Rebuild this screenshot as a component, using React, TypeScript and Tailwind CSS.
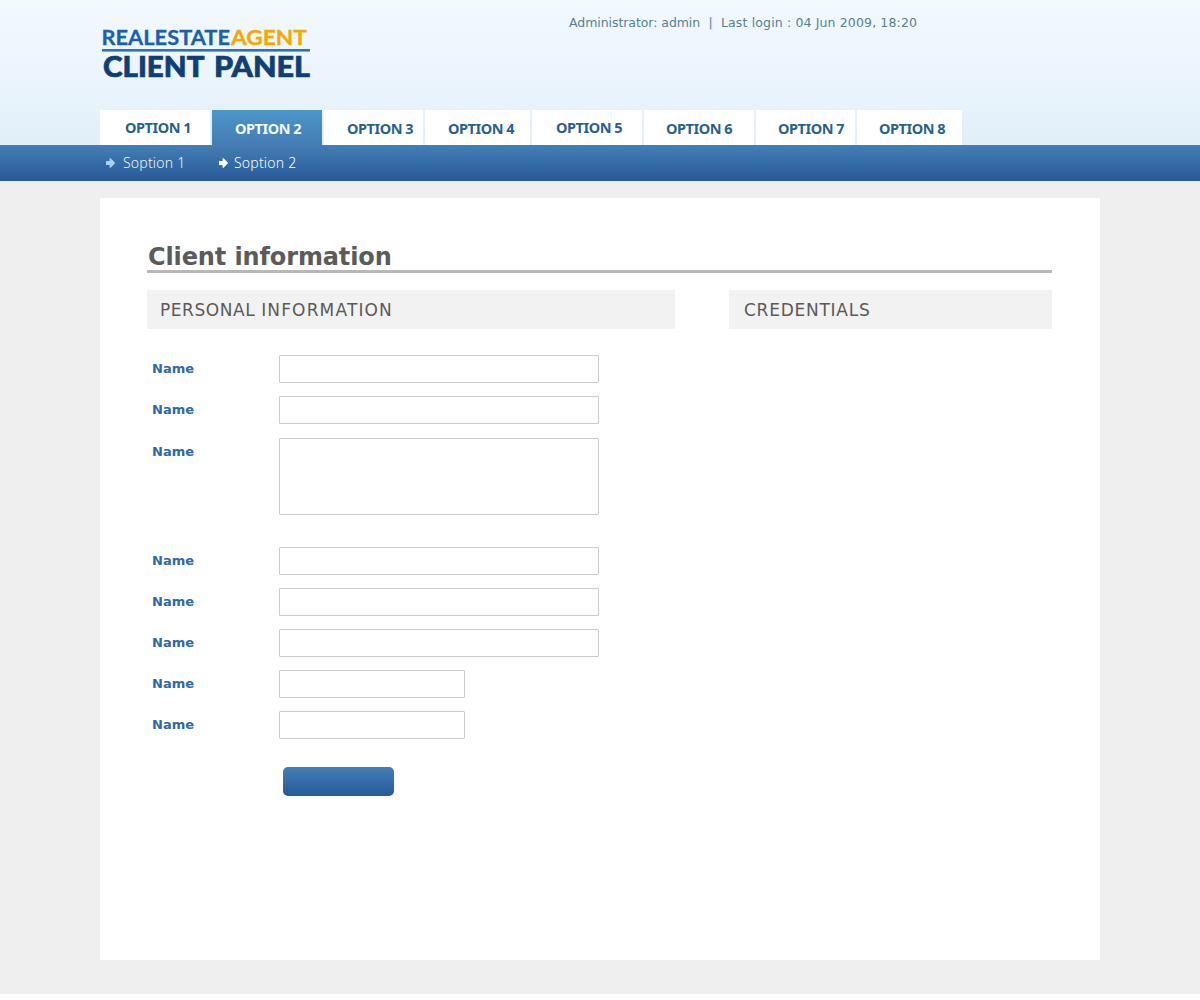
import React from "react";

const tabs = [
  { label: "OPTION 1", box: "w-[110px] pl-[25px] pt-px" },
  { label: "OPTION 2", box: "w-[110px] pl-[23px] pt-[3px]", active: true },
  { label: "OPTION 3", box: "w-[99px] pl-[23px] pt-[3px]" },
  { label: "OPTION 4", box: "w-[105px] pl-[23px] pt-[3px]" },
  { label: "OPTION 5", box: "w-[110px] pl-[24px] pt-px" },
  { label: "OPTION 6", box: "w-[110px] pl-[22px] pt-[3px]" },
  { label: "OPTION 7", box: "w-[99px] pl-[22px] pt-[3px]" },
  { label: "OPTION 8", box: "w-[105px] pl-[22px] pt-[3px]" },
];

const fields = [
  { size: "h-7 w-80", gap: "mb-[13px]" },
  { size: "h-7 w-80", gap: "mb-[14px]" },
  { size: "h-[77px] w-80", gap: "mb-8", area: true },
  { size: "h-7 w-80", gap: "mb-[13px]" },
  { size: "h-7 w-80", gap: "mb-[13px]" },
  { size: "h-7 w-80", gap: "mb-[13px]" },
  { size: "h-7 w-[186px]", gap: "mb-[13px]" },
  { size: "h-7 w-[186px]", gap: "" },
];

function Logo() {
  return (
    <svg width="214" height="60" viewBox="0 0 214 60" className="block" fontFamily="Lato, sans-serif">
      <text x="1.5" y="21" fontSize="21.5" fontWeight="700" fill="#1b5fae" stroke="#1b5fae" strokeWidth="0.3" textLength="128.5" lengthAdjust="spacingAndGlyphs">REALESTATE</text>
      <text x="131" y="21" fontSize="21.5" fontWeight="700" fill="#f6a800" stroke="#f6a800" strokeWidth="0.3" textLength="76" lengthAdjust="spacingAndGlyphs">AGENT</text>
      <rect x="2" y="25" width="208" height="2.6" fill="#2e72b8" />
      <g fontSize="28.5" fontWeight="900" fill="#103f76" stroke="#103f76" strokeWidth="0.7">
        <text x="3" y="53.3" textLength="101.5" lengthAdjust="spacingAndGlyphs">CLIENT</text>
        <text x="114" y="53.3" textLength="96" lengthAdjust="spacingAndGlyphs">PANEL</text>
      </g>
    </svg>
  );
}

function Arrow({ color }: { color: string }) {
  return (
    <svg width="9" height="10" viewBox="0 0 9 10" className="block" fill={color}>
      <path d="M0 3h3.6V0.2H4.6L9 4.8V5.2L4.6 9.8H3.6V7H0Z" />
    </svg>
  );
}

function Heading({ children, className }: { children: React.ReactNode; className: string }) {
  return (
    <h2 className={`flex h-[39px] items-center bg-[#f2f2f2] pt-[2px] text-[17px] whitespace-nowrap text-[#5a5a5a] ${className}`}>
      {children}
    </h2>
  );
}

export default function App() {
  return (
    <div className="h-[1000px] w-[1200px] overflow-hidden bg-white font-['DejaVu_Sans',sans-serif]">
      <div className="h-[994px] bg-[#efefef]">
        <header className="flex h-[145px] flex-col justify-between bg-linear-to-b from-[#f2f9ff] via-[#ecf5fd] to-[#e1eff8] px-[100px]">
          <div className="flex">
            <div className="mt-6 w-[469px]">
              <Logo />
            </div>
            <p className="mt-[15px] text-[12.5px] leading-4 tracking-[0.14px] whitespace-pre text-[#567f99]">
              <span className="tracking-[-0.06px]">Administrator: admin</span>
              {"  |  Last login : 04 Jun 2009, 18:20"}
            </p>
          </div>
          <nav className="flex gap-[2px]">
            {tabs.map((t) => (
              <a
                key={t.label}
                className={`flex h-[35px] items-center font-['Noto_Sans',sans-serif] text-[14.5px] font-bold tracking-[-0.45px] whitespace-nowrap ${t.box} ${
                  t.active ? "bg-linear-to-b from-[#4c97c9] to-[#447cb3] text-[#f2f9ff]" : "bg-white text-[#286190]"
                }`}
              >
                {t.label}
              </a>
            ))}
          </nav>
        </header>

        <div className="flex h-9 items-center bg-linear-to-b from-[#457eb4] via-[#346ca8] to-[#295998] pl-[106px] font-['Noto_Sans',sans-serif] text-[14px] font-light tracking-[0.2px]">
          <div className="flex w-[113px] items-center gap-2 text-[#f0f6e4]">
            <Arrow color="#a9d2ff" />
            <span className="pb-[2px]">Soption 1</span>
          </div>
          <div className="flex items-center gap-[6px] text-white">
            <Arrow color="#ffffff" />
            <span className="pb-[2px]">Soption 2</span>
          </div>
        </div>

        <main className="mx-[100px] mt-[17px] h-[762px] bg-white pt-[42px] pr-12 pl-[47px]">
          <h1 className="h-[33px] border-b-3 border-[#b8b8b8] pl-px text-[24px] leading-[34px] font-bold tracking-[-0.12px] whitespace-nowrap text-[#5b5b5b]">
            Client information
          </h1>
          <div className="mt-[17px] flex justify-between">
            <section className="w-[528px]">
              <Heading className="pl-[13px]">
                <span className="whitespace-pre">
                  <span className="tracking-[0.55px]">{"PERSONAL "}</span>
                  <span className="tracking-[1.15px]">INFORMATION</span>
                </span>
              </Heading>
              <form className="mt-[26px]">
                {fields.map((f, i) => (
                  <div key={i} className={`flex ${f.gap}`}>
                    <label className="w-[132px] pl-[5px] text-[13px] leading-[27px] font-bold text-[#2e69a8]">Name</label>
                    {f.area ? (
                      <textarea className={`block resize-none rounded-[1px] border border-[#cccccc] bg-white ${f.size}`} />
                    ) : (
                      <input className={`block rounded-[1px] border border-[#cccccc] bg-white ${f.size}`} />
                    )}
                  </div>
                ))}
                <button type="button" className="mt-7 ml-[136px] block h-[29px] w-[111px] rounded-[5px] bg-linear-to-b from-[#457eb4] via-[#346ca8] to-[#295998]" />
              </form>
            </section>
            <section className="w-[323px]">
              <Heading className="pl-[15px] tracking-[0.75px]">CREDENTIALS</Heading>
            </section>
          </div>
        </main>
      </div>
    </div>
  );
}
